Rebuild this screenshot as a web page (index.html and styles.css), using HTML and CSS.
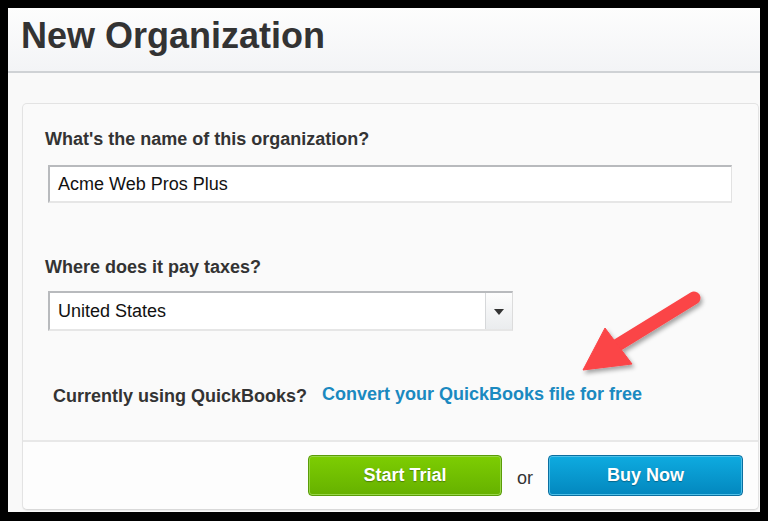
FILE: index.html
```html
<!DOCTYPE html>
<html lang="en">
<head>
<meta charset="utf-8">
<title>New Organization</title>
<link rel="stylesheet" href="styles.css">
</head>
<body>
<div class="frame">
  <header class="page-header">
    <h1 class="title">New Organization</h1>
  </header>
  <main class="page-main">
    <section class="card">
      <div class="card-body">
        <label class="field-label">What's the name of this organization?</label>
        <div class="text-input">Acme Web Pros Plus</div>
        <label class="field-label field-label-2">Where does it pay taxes?</label>
        <div class="select">
          <div class="select-value">United States</div>
          <div class="select-button"><span class="caret"></span></div>
        </div>
        <div class="qb-row">
          <span class="qb-text">Currently using QuickBooks?</span>
          <a class="qb-link" href="#">Convert your QuickBooks file for free</a>
        </div>
      </div>
      <div class="card-footer">
        <button class="btn btn-green">Start Trial</button>
        <span class="or">or</span>
        <button class="btn btn-blue">Buy Now</button>
      </div>
    </section>
  </main>
</div>
<svg class="annotation" width="768" height="521" viewBox="0 0 768 521" aria-hidden="true">
  <defs>
    <filter id="shadow" x="-20%" y="-20%" width="140%" height="140%">
      <feDropShadow dx="2" dy="3" stdDeviation="2.2" flood-color="#000" flood-opacity="0.35"/>
    </filter>
  </defs>
  <g filter="url(#shadow)" fill="#fb4447" stroke="#fb4447">
    <line x1="694" y1="298" x2="616" y2="346" stroke-width="13" stroke-linecap="round"/>
    <polygon points="583,370 605,328 632,364" stroke-width="1" stroke-linejoin="round"/>
  </g>
</svg>
</body>
</html>
```

FILE: styles.css
```css
* { box-sizing: border-box; }

html, body {
  margin: 0;
  padding: 0;
  background: #000;
}

body {
  width: 768px;
  height: 521px;
  position: relative;
  overflow: hidden;
  font-family: "Liberation Sans", Arial, sans-serif;
  color: #333;
}

.frame {
  margin: 8px 8px 0 8px;
  width: 752px;
  height: 504px;
  background: #f9f9f9;
  display: flex;
  flex-direction: column;
}

.page-header {
  height: 65px;
  padding: 10px 12px 0 13px;
  background: linear-gradient(#fdfdfd, #f3f4f6);
  border-bottom: 2px solid #cfd2d5;
}

.title {
  margin: 0;
  font-size: 36px;
  line-height: 36px;
  font-weight: bold;
  color: #333;
}

.page-main {
  flex: 1;
  padding: 30px 1px 2px 14px;
  display: flex;
}

.card {
  flex: 1;
  background: #fafafa;
  border: 1px solid #e3e3e3;
  border-bottom-color: #d9d9d9;
  border-radius: 5px;
  display: flex;
  flex-direction: column;
  box-shadow: 0 1px 1px rgba(0,0,0,0.06);
}

.card-body {
  padding: 24px 26px 33px 22px;
  display: flex;
  flex-direction: column;
  align-items: flex-start;
}

.field-label {
  font-size: 18px;
  line-height: 22px;
  font-weight: bold;
  color: #333;
}

.text-input {
  margin: 15px 0 0 3px;
  align-self: stretch;
  height: 38px;
  padding: 0 0 0 8px;
  background: #fff;
  border-top: 2px solid #b8babd;
  border-left: 2px solid #b8babd;
  border-right: 1px solid #e2e2e2;
  border-bottom: 2px solid #e6e6e6;
  font-size: 18px;
  line-height: 34px;
  color: #111;
}

.field-label-2 {
  margin-top: 53px;
}

.select {
  margin: 13px 0 0 3px;
  width: 465px;
  height: 40px;
  display: flex;
  background: #fff;
  border-top: 2px solid #b8babd;
  border-left: 2px solid #b8babd;
  border-right: 1px solid #dcdcdc;
  border-bottom: 2px solid #e6e6e6;
}

.select-value {
  flex: 1;
  padding-left: 8px;
  font-size: 18px;
  line-height: 36px;
  color: #111;
}

.select-button {
  width: 27px;
  border-left: 1px solid #d6d8da;
  background: linear-gradient(#fdfdfd, #eaecee);
  display: flex;
  align-items: center;
  justify-content: center;
}

.caret {
  width: 0;
  height: 0;
  border-left: 5px solid transparent;
  border-right: 5px solid transparent;
  border-top: 6px solid #333;
  margin-top: 2px;
}

.qb-row {
  margin: 54px 0 0 8px;
  display: flex;
  align-items: flex-start;
  gap: 15px;
  font-size: 18px;
  line-height: 22px;
  font-weight: bold;
}

.qb-text {
  color: #333;
}

.qb-link {
  color: #1a89c0;
  text-decoration: none;
  margin-top: -2px;
}

.card-footer {
  flex: 1;
  border-top: 2px solid #e8e8e8;
  background: #fdfdfd;
  border-radius: 0 0 5px 5px;
  display: flex;
  justify-content: flex-end;
  align-items: center;
  gap: 15px;
  padding: 0 15px 1px 0;
}

.btn {
  width: 194px;
  height: 41px;
  border-radius: 4px;
  font-family: "Liberation Sans", Arial, sans-serif;
  font-size: 18px;
  font-weight: bold;
  color: #fff;
  text-shadow: 0 1px 1px rgba(0,0,0,0.3);
  padding: 0;
  cursor: pointer;
}

.btn-green {
  background: linear-gradient(#7dcd02, #66b100);
  border: 1px solid #5a9c08;
  box-shadow: inset 0 0 0 1px #98d648;
}

.btn-blue {
  width: 195px;
  background: linear-gradient(#0eabe0, #0387be);
  border: 1px solid #0b6e9f;
  box-shadow: inset 0 0 0 1px #4fc0e8;
}

.or {
  width: 16px;
  font-size: 18px;
  line-height: 22px;
  color: #333;
  margin-top: 6px;
}

.annotation {
  position: absolute;
  left: 0;
  top: 0;
  pointer-events: none;
}
```
